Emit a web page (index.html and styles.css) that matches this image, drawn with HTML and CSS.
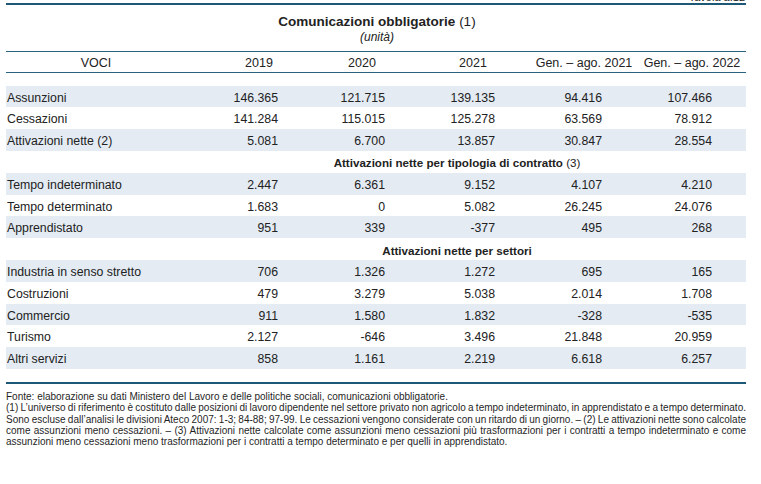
FILE: index.html
```html
<!DOCTYPE html>
<html lang="it">
<head>
<meta charset="utf-8">
<title>Comunicazioni obbligatorie</title>
<link rel="stylesheet" href="styles.css">
</head>
<body>
<div class="page">
  <div class="tavola">Tavola a.12</div>
  <div class="rule-thick"></div>
  <header class="title-block">
    <h1 class="title">Comunicazioni obbligatorie <span class="title-note">(1)</span></h1>
    <p class="unit">(unità)</p>
  </header>

  <div class="table">
    <div class="row head">
      <div class="cell label-h">VOCI</div>
      <div class="cell">2019</div>
      <div class="cell">2020</div>
      <div class="cell">2021</div>
      <div class="cell">Gen. – ago. 2021</div>
      <div class="cell">Gen. – ago. 2022</div>
    </div>

    <div class="body">
      <div class="row band"><div class="cell label">Assunzioni</div><div class="cell num c2">146.365</div><div class="cell num c3">121.715</div><div class="cell num c4">139.135</div><div class="cell num c5">94.416</div><div class="cell num c6">107.466</div></div>
      <div class="row"><div class="cell label">Cessazioni</div><div class="cell num c2">141.284</div><div class="cell num c3">115.015</div><div class="cell num c4">125.278</div><div class="cell num c5">63.569</div><div class="cell num c6">78.912</div></div>
      <div class="row band"><div class="cell label">Attivazioni nette (2)</div><div class="cell num c2">5.081</div><div class="cell num c3">6.700</div><div class="cell num c4">13.857</div><div class="cell num c5">30.847</div><div class="cell num c6">28.554</div></div>
      <div class="row section"><div class="cell sec-title"><b>Attivazioni nette per tipologia di contratto</b> (3)</div></div>
      <div class="row band"><div class="cell label">Tempo indeterminato</div><div class="cell num c2">2.447</div><div class="cell num c3">6.361</div><div class="cell num c4">9.152</div><div class="cell num c5">4.107</div><div class="cell num c6">4.210</div></div>
      <div class="row"><div class="cell label">Tempo determinato</div><div class="cell num c2">1.683</div><div class="cell num c3">0</div><div class="cell num c4">5.082</div><div class="cell num c5">26.245</div><div class="cell num c6">24.076</div></div>
      <div class="row band"><div class="cell label">Apprendistato</div><div class="cell num c2">951</div><div class="cell num c3">339</div><div class="cell num c4">-377</div><div class="cell num c5">495</div><div class="cell num c6">268</div></div>
      <div class="row section"><div class="cell sec-title"><b>Attivazioni nette per settori</b></div></div>
      <div class="row band"><div class="cell label">Industria in senso stretto</div><div class="cell num c2">706</div><div class="cell num c3">1.326</div><div class="cell num c4">1.272</div><div class="cell num c5">695</div><div class="cell num c6">165</div></div>
      <div class="row"><div class="cell label">Costruzioni</div><div class="cell num c2">479</div><div class="cell num c3">3.279</div><div class="cell num c4">5.038</div><div class="cell num c5">2.014</div><div class="cell num c6">1.708</div></div>
      <div class="row band"><div class="cell label">Commercio</div><div class="cell num c2">911</div><div class="cell num c3">1.580</div><div class="cell num c4">1.832</div><div class="cell num c5">-328</div><div class="cell num c6">-535</div></div>
      <div class="row"><div class="cell label">Turismo</div><div class="cell num c2">2.127</div><div class="cell num c3">-646</div><div class="cell num c4">3.496</div><div class="cell num c5">21.848</div><div class="cell num c6">20.959</div></div>
      <div class="row band"><div class="cell label">Altri servizi</div><div class="cell num c2">858</div><div class="cell num c3">1.161</div><div class="cell num c4">2.219</div><div class="cell num c5">6.618</div><div class="cell num c6">6.257</div></div>
    </div>
  </div>

  <div class="rule-thick bottom"></div>

  <footer class="notes">
    <p class="line">Fonte: elaborazione su dati Ministero del Lavoro e delle politiche sociali, comunicazioni obbligatorie.</p>
    <p class="line j">(1) L’universo di riferimento è costituto dalle posizioni di lavoro dipendente nel settore privato non agricolo a tempo indeterminato, in apprendistato e a tempo determinato.</p>
    <p class="line j">Sono escluse dall’analisi le divisioni Ateco 2007: 1-3; 84-88; 97-99. Le cessazioni vengono considerate con un ritardo di un giorno. – (2) Le attivazioni nette sono calcolate</p>
    <p class="line j">come assunzioni meno cessazioni. – (3) Attivazioni nette calcolate come assunzioni meno cessazioni più trasformazioni per i contratti a tempo indeterminato e come</p>
    <p class="line">assunzioni meno cessazioni meno trasformazioni per i contratti a tempo determinato e per quelli in apprendistato.</p>
  </footer>
</div>
</body>
</html>
```

FILE: styles.css
```css
* { box-sizing: border-box; }

html, body {
  margin: 0;
  padding: 0;
  background: #ffffff;
}

body {
  font-family: "Liberation Sans", Arial, Helvetica, sans-serif;
  color: #222222;
  overflow: hidden;
}

.page {
  width: 761px;
  height: 484px;
  padding: 0 15px 0 6px;
}

.tavola {
  height: 11px;
  margin-top: -8px;
  font-size: 11px;
  line-height: 11px;
  text-align: right;
  padding-right: 1px;
  color: #222;
}

.rule-thick {
  height: 2px;
  background: #1d5877;
}

.rule-thick.bottom {
  margin-top: 13px;
}

.title-block {
  padding: 9px 0 7px 0;
  text-align: center;
}

.title {
  margin: 0;
  font-size: 13.5px;
  line-height: 16px;
  font-weight: bold;
  padding-left: 2px;
}

.title-note {
  font-weight: normal;
}

.unit {
  margin: 0;
  font-size: 12px;
  line-height: 14px;
  font-style: italic;
  padding-left: 2px;
}

.row {
  display: grid;
  grid-template-columns: 204px 98px 108px 114px 108px 108px;
  height: 21.8px;
  align-items: center;
  font-size: 12.3px;
}

.row .cell {
  padding-top: 2px;
}

.row.head {
  height: 22px;
  border-top: 1px solid #2a6380;
  border-bottom: 1px solid #2a6380;
  text-align: center;
  font-size: 12.5px;
}

.label-h {
  padding-right: 24px;
}

.body {
  margin-top: 12.7px;
}

.band {
  background: #e4ebf3;
}

.label {
  padding-left: 1px;
  white-space: nowrap;
}

.num { text-align: right; }
.c2 { padding-right: 30px; }
.c3 { padding-right: 31px; }
.c4 { padding-right: 35px; }
.c5 { padding-right: 36px; }
.c6 { padding-right: 34px; }

.sec-title {
  grid-column: 2 / -1;
  text-align: center;
  padding-right: 42px;
  font-size: 11.6px;
}

.notes {
  padding-top: 7px;
  font-size: 10px;
  line-height: 11.3px;
  color: #1f1f1f;
}

.line {
  margin: 0;
  white-space: nowrap;
}

.line.j {
  text-align: justify;
  text-align-last: justify;
  white-space: normal;
  word-spacing: -0.6px;
}
```
